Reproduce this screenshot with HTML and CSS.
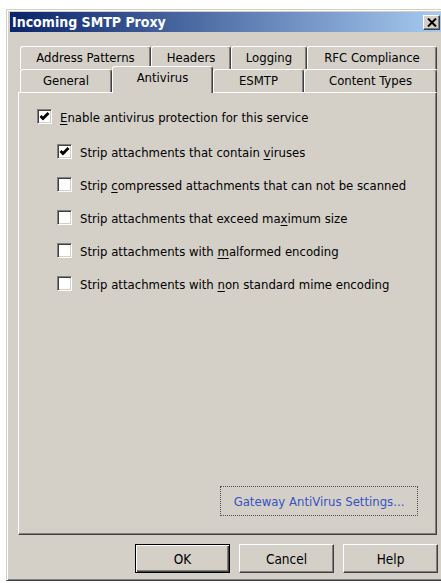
FILE: index.html
```html
<!DOCTYPE html>
<html lang="en">
<head>
<meta charset="utf-8">
<title>Incoming SMTP Proxy</title>
<link rel="stylesheet" href="styles.css">
</head>
<body>
<div class="dialog">
  <div class="titlebar">
    <span class="title">Incoming SMTP Proxy</span>
    <span class="close-btn">
      <svg width="10" height="9" viewBox="0 0 10 9"><path d="M1 0.5 L9 8.5 M9 0.5 L1 8.5" stroke="#000" stroke-width="2" fill="none"/></svg>
    </span>
  </div>

  <div class="tabs">
    <div class="tab-row">
      <div class="tab tab-addr">Address Patterns</div>
      <div class="tab tab-headers">Headers</div>
      <div class="tab tab-logging">Logging</div>
      <div class="tab tab-rfc">RFC Compliance</div>
    </div>
    <div class="tab-row">
      <div class="tab tab-general">General</div>
      <div class="tab tab-antivirus selected">Antivirus</div>
      <div class="tab tab-esmtp">ESMTP</div>
      <div class="tab tab-content">Content Types</div>
    </div>
  </div>

  <div class="panel">
    <label class="check">
      <span class="box"><svg width="13" height="13" viewBox="0 0 13 13"><path d="M2.5 6 L5 8.5 L10.5 3" stroke="#000" stroke-width="2.8" fill="none"/></svg></span>
      <span class="label"><u>E</u>nable antivirus protection for this service</span>
    </label>
    <div class="sub">
      <label class="check">
        <span class="box"><svg width="13" height="13" viewBox="0 0 13 13"><path d="M2.5 6 L5 8.5 L10.5 3" stroke="#000" stroke-width="2.8" fill="none"/></svg></span>
        <span class="label">Strip attachments that contain <u>v</u>iruses</span>
      </label>
      <label class="check">
        <span class="box"></span>
        <span class="label">Strip <u>c</u>ompressed attachments that can not be scanned</span>
      </label>
      <label class="check">
        <span class="box"></span>
        <span class="label">Strip attachments that exceed ma<u>x</u>imum size</span>
      </label>
      <label class="check">
        <span class="box"></span>
        <span class="label">Strip attachments with <u>m</u>alformed encoding</span>
      </label>
      <label class="check">
        <span class="box"></span>
        <span class="label">Strip attachments with <u>n</u>on standard mime encoding</span>
      </label>
    </div>
    <div class="panel-foot">
      <button class="link-btn">Gateway AntiVirus Settings...</button>
    </div>
  </div>

  <div class="buttons">
    <button class="btn default">OK</button>
    <button class="btn">Cancel</button>
    <button class="btn">Help</button>
  </div>
</div>
</body>
</html>
```

FILE: styles.css
```css
html, body {
  margin: 0;
  padding: 0;
  background: #ffffff;
}

body {
  font-family: "DejaVu Sans Condensed", "DejaVu Sans", sans-serif;
  font-stretch: condensed;
  font-size: 13px;
  color: #000;
}

.dialog {
  box-sizing: border-box;
  width: 440px;
  height: 572px;
  margin: 9px 0 0 6px;
  padding: 2px 3px;
  background: #d4d0c8;
  border: 1px solid;
  border-color: #d4d0c8 #404040 #404040 #d4d0c8;
  box-shadow: inset 1px 1px 0 #ffffff, inset -1px -1px 0 #808080;
  display: flex;
  flex-direction: column;
}

/* caption bar */
.titlebar {
  height: 20px;
  display: flex;
  align-items: center;
  justify-content: space-between;
  background: linear-gradient(to right, #0a246a, #a6caf0);
  padding: 0 2px 0 2px;
}

.title {
  color: #fff;
  font-weight: bold;
  font-size: 14px;
}

.close-btn {
  box-sizing: border-box;
  width: 17px;
  height: 15px;
  background: #d4d0c8;
  border: 1px solid;
  border-color: #ffffff #404040 #404040 #ffffff;
  box-shadow: inset -1px -1px 0 #808080;
  display: flex;
  align-items: center;
  justify-content: center;
}

.close-btn svg {
  display: block;
}

/* tab strip */
.tabs {
  margin: 14px 0 0 10px;
  display: flex;
  flex-direction: column;
}

.tab-row {
  display: flex;
  height: 23px;
}

.tab {
  box-sizing: border-box;
  height: 23px;
  display: flex;
  align-items: center;
  justify-content: center;
  border-top: 1px solid #ffffff;
  border-left: 1px solid #ffffff;
  border-right: 1px solid #404040;
  border-radius: 3px 3px 0 0;
  box-shadow: inset -1px 0 0 #808080;
  background: #d4d0c8;
  padding-bottom: 1px;
}

.tab-addr { width: 131px; }
.tab-headers { width: 80px; }
.tab-logging { width: 76px; }
.tab-rfc { width: 130px; }

.tab-general { width: 92px; }
.tab-antivirus { width: 101px; }
.tab-esmtp { width: 91px; }
.tab-content { width: 133px; }

.tab.selected {
  position: relative;
  z-index: 1;
  height: 27px;
  margin-top: -3px;
  padding-bottom: 5px;
}

/* page body */
.panel {
  box-sizing: border-box;
  width: 419px;
  height: 443px;
  margin-left: 8px;
  border: 1px solid;
  border-color: #ffffff #404040 #404040 #ffffff;
  box-shadow: inset -1px -1px 0 #808080;
  padding: 16px 0 0 18px;
  display: flex;
  flex-direction: column;
}

.check {
  display: flex;
  align-items: center;
  height: 15px;
  gap: 8px;
}

.label {
  padding-top: 2px;
}

.box {
  box-sizing: border-box;
  width: 15px;
  height: 15px;
  flex: none;
  background: #ffffff;
  border: 1px solid;
  border-color: #808080 #ffffff #ffffff #808080;
  box-shadow: inset 1px 1px 0 #404040, inset -1px -1px 0 #d4d0c8;
  display: flex;
  align-items: center;
  justify-content: center;
}

.box svg {
  display: block;
}

.label u {
  text-decoration-thickness: 1px;
  text-underline-offset: 2px;
}

.sub {
  margin: 20px 0 0 20px;
  display: flex;
  flex-direction: column;
  gap: 18px;
}

.panel-foot {
  margin-top: auto;
  display: flex;
  justify-content: flex-end;
  padding: 0 18px 18px 0;
}

.link-btn {
  box-sizing: border-box;
  width: 198px;
  height: 30px;
  font: inherit;
  font-stretch: condensed;
  color: #3553c4;
  background: transparent;
  border: 1px dotted #505050;
  padding: 0;
}

/* dialog buttons */
.buttons {
  margin-top: 9px;
  width: 428px;
  display: flex;
  justify-content: flex-end;
  gap: 9px;
}

.btn {
  box-sizing: border-box;
  width: 95px;
  height: 29px;
  font: inherit;
  font-size: 13.5px;
  font-stretch: condensed;
  color: #000;
  background: #d4d0c8;
  border: 1px solid;
  border-color: #ffffff #404040 #404040 #ffffff;
  box-shadow: inset -1px -1px 0 #808080;
  padding: 0;
}

.btn.default {
  border: 1px solid #000;
  box-shadow: inset 1px 1px 0 #ffffff, inset -1px -1px 0 #404040, inset -2px -2px 0 #808080;
}
```
